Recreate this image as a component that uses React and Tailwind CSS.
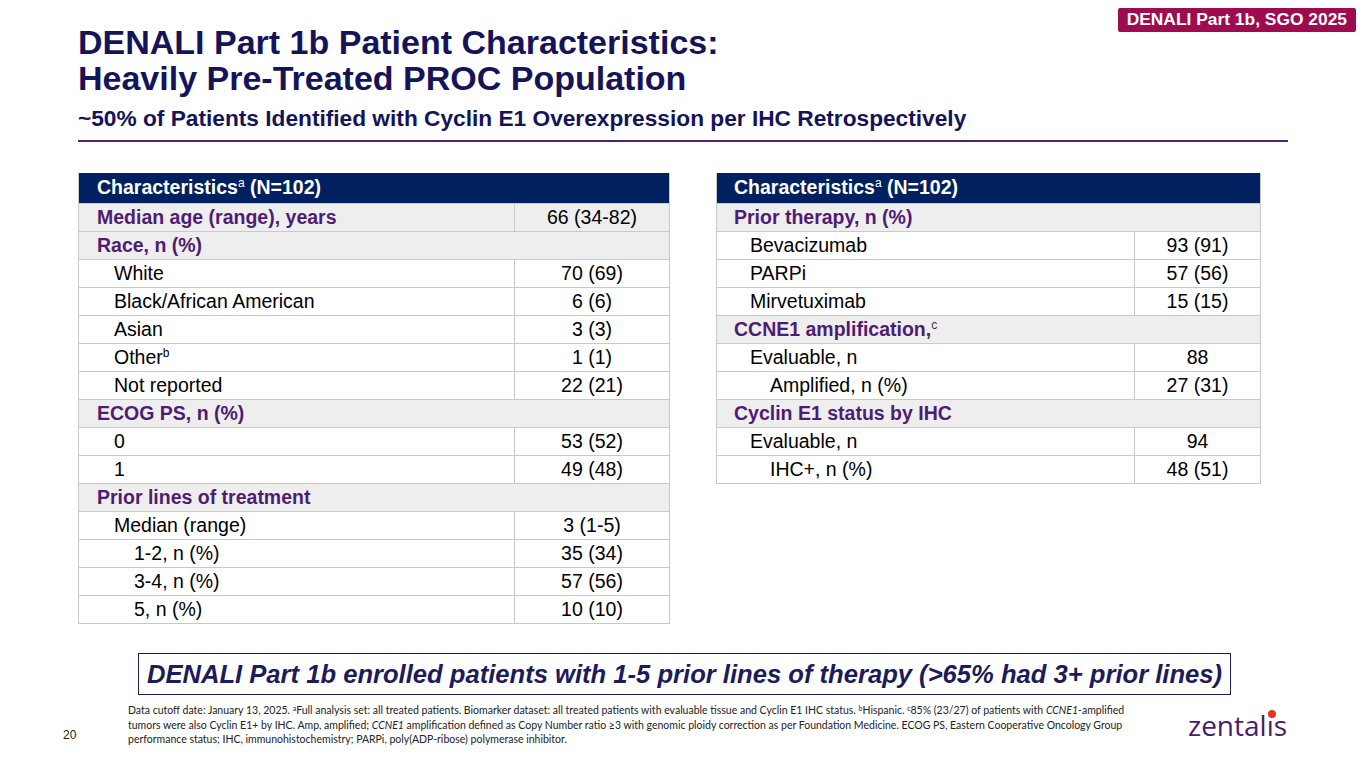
import React from 'react';

// Table content
const LEFT_ROWS = [
  { kind: 'section', label: 'Median age (range), years', value: '66 (34-82)' },
  { kind: 'section', label: 'Race, n (%)' },
  { label: 'White', value: '70 (69)', level: 1 },
  { label: 'Black/African American', value: '6 (6)', level: 1 },
  { label: 'Asian', value: '3 (3)', level: 1 },
  { label: 'Other', sup: 'b', value: '1 (1)', level: 1 },
  { label: 'Not reported', value: '22 (21)', level: 1 },
  { kind: 'section', label: 'ECOG PS, n (%)' },
  { label: '0', value: '53 (52)', level: 1 },
  { label: '1', value: '49 (48)', level: 1 },
  { kind: 'section', label: 'Prior lines of treatment' },
  { label: 'Median (range)', value: '3 (1-5)', level: 1 },
  { label: '1-2, n (%)', value: '35 (34)', level: 2 },
  { label: '3-4, n (%)', value: '57 (56)', level: 2 },
  { label: '5, n (%)', value: '10 (10)', level: 2 },
];

const RIGHT_ROWS = [
  { kind: 'section', label: 'Prior therapy, n (%)' },
  { label: 'Bevacizumab', value: '93 (91)', level: 1 },
  { label: 'PARPi', value: '57 (56)', level: 1 },
  { label: 'Mirvetuximab', value: '15 (15)', level: 1 },
  { kind: 'section', label: 'CCNE1 amplification,', sup: 'c' },
  { label: 'Evaluable, n', value: '88', level: 1 },
  { label: 'Amplified, n (%)', value: '27 (31)', level: 2 },
  { kind: 'section', label: 'Cyclin E1 status by IHC' },
  { label: 'Evaluable, n', value: '94', level: 1 },
  { label: 'IHC+, n (%)', value: '48 (51)', level: 2 },
];

function Sup({ children }) {
  return <sup className="text-[12px] align-[7px] top-0 font-normal">{children}</sup>;
}

function CharTable({ rows, width, valueWidth, pad }) {
  return (
    <div className={`${width} border-x border-b border-[#c9c9c9] text-[19.5px] leading-none`}>
      <div className={`h-[30px] bg-[#002060] text-white font-bold flex items-center ${pad.section}`}>
        <span>
          Characteristics<Sup>a</Sup> (N=102)
        </span>
      </div>
      {rows.map((row, i) => {
        const isSection = row.kind === 'section';
        const spans = isSection && !row.value;
        return (
          <div
            key={i}
            className={`h-[28px] flex border-t border-[#c9c9c9] ${isSection ? 'bg-[#eeeeee]' : 'bg-white'}`}
          >
            <div
              className={`flex-1 flex items-center ${
                isSection
                  ? `${pad.section} font-bold text-[#4e1c72]`
                  : row.level === 2
                  ? `${pad.level2} text-black`
                  : `${pad.level1} text-black`
              }`}
            >
              <span>
                {row.label}
                {row.sup && <Sup>{row.sup}</Sup>}
              </span>
            </div>
            {!spans && (
              <div className={`${valueWidth} border-l border-[#c9c9c9] flex items-center justify-center text-black`}>
                {row.value}
              </div>
            )}
          </div>
        );
      })}
    </div>
  );
}

function ZentalisLogo() {
  return (
    <div className="relative text-[28px] leading-none text-[#4a1a6b]" style={{ fontFamily: '"Open Sans", sans-serif' }}>
      zental<span>ı</span>s
      <span className="absolute right-[11px] top-[-1px] w-[8px] h-[8px] rounded-full bg-[#e8321e]" />
    </div>
  );
}

export default function App() {
  return (
    <div
      className="relative w-[1365px] h-[768px] bg-white overflow-hidden flex flex-col"
      style={{ fontFamily: '"Liberation Sans", Arial, sans-serif' }}
    >
      {/* Badge */}
      <div className="absolute top-[8px] right-[9px] h-[24px] px-[9px] bg-[#9e0b4e] text-white font-bold text-[17.4px] leading-none flex items-center rounded-[2px]">
        DENALI Part 1b, SGO 2025
      </div>

      {/* Title */}
      <div className="pl-[78px] pt-[24px] pr-[77px]">
        <h1 className="text-[34px] leading-[36px] font-bold text-[#15145a]">
          DENALI Part 1b Patient Characteristics:
          <br />
          Heavily Pre-Treated PROC Population
        </h1>
        <h2 className="mt-[9px] text-[22.7px] leading-[26px] font-bold text-[#15145a]">
          ~50% of Patients Identified with Cyclin E1 Overexpression per IHC Retrospectively
        </h2>
        <div className="mt-[9px] h-[2px] bg-[#4b2470]" />
      </div>

      {/* Tables */}
      <div className="flex items-start pl-[78px] mt-[31px] gap-[46px]">
        <CharTable
          rows={LEFT_ROWS}
          width="w-[592px]"
          valueWidth="w-[155px]"
          pad={{ section: 'pl-[18px]', level1: 'pl-[35px]', level2: 'pl-[55px]' }}
        />
        <CharTable
          rows={RIGHT_ROWS}
          width="w-[545px]"
          valueWidth="w-[126px]"
          pad={{ section: 'pl-[17px]', level1: 'pl-[33px]', level2: 'pl-[53px]' }}
        />
      </div>

      {/* Callout */}
      <div className="mt-[29px] ml-[138px] w-[1093px] h-[42px] border border-[#1c1b5c] flex items-center justify-center">
        <span className="text-[25.6px] font-bold italic text-[#1c1b5c]">
          DENALI Part 1b enrolled patients with 1-5 prior lines of therapy (&gt;65% had 3+ prior lines)
        </span>
      </div>

      {/* Footer */}
      <div className="flex items-start mt-[8px] pl-[63px]">
        <div className="w-[65px] pt-[23px] text-[12px] text-[#222]">20</div>
        <div
          className="w-[1010px] text-[10.5px] leading-[14.5px] text-[#222]"
          style={{ fontFamily: 'Lato, "Open Sans", sans-serif' }}
        >
          Data cutoff date: January 13, 2025. <sup className="text-[7px]">a</sup>Full analysis set: all treated patients. Biomarker dataset: all treated patients with evaluable tissue and Cyclin E1 IHC status. <sup className="text-[7px]">b</sup>Hispanic. <sup className="text-[7px]">c</sup>85% (23/27) of patients with <i>CCNE1</i>-amplified
          <br />
          tumors were also Cyclin E1+ by IHC. Amp, amplified; <i>CCNE1</i> amplification defined as Copy Number ratio ≥3 with genomic ploidy correction as per Foundation Medicine. ECOG PS, Eastern Cooperative Oncology Group
          <br />
          performance status; IHC, immunohistochemistry; PARPi, poly(ADP-ribose) polymerase inhibitor.
        </div>
        <div className="ml-[50px] pt-[8px]">
          <ZentalisLogo />
        </div>
      </div>
    </div>
  );
}
